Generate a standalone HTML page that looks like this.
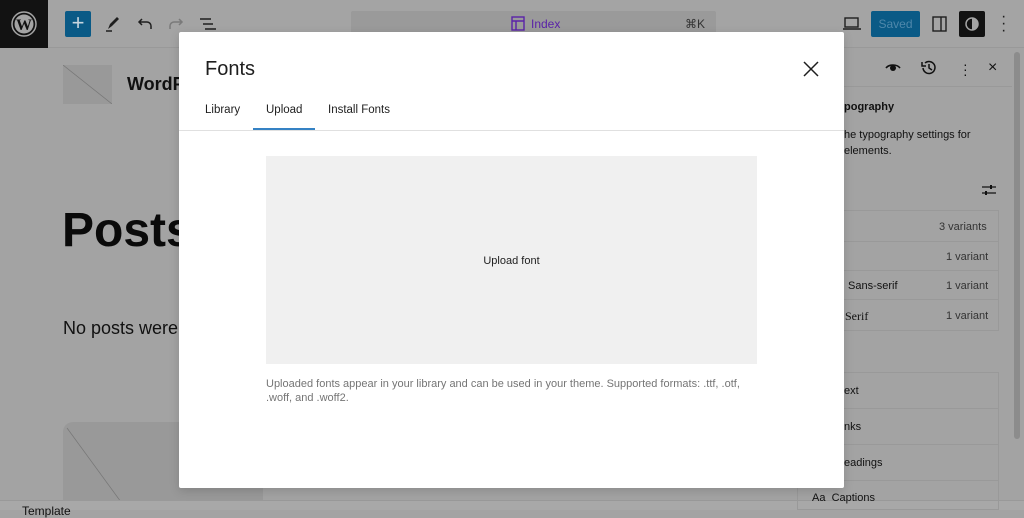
<!DOCTYPE html>
<html><head><style>
*{box-sizing:border-box;margin:0;padding:0}
body{width:1024px;height:510px;overflow:hidden;background:#a3a3a3;font-family:"Liberation Sans",sans-serif;position:relative;color:#111}
.a{position:absolute}
</style></head><body>
<div class="a" style="left:0;top:0;width:1024px;height:48px;background:#a4a4a4;border-bottom:1px solid #999"></div>
<div class="a" style="left:0;top:0;width:48px;height:48px;background:#121212"></div>
<svg class="a" style="left:11px;top:11px" width="26" height="26" viewBox="0 0 26 26"><circle cx="13" cy="13" r="12" fill="none" stroke="#a4a4a4" stroke-width="1.5"/><circle cx="13" cy="13" r="9.5" fill="#a4a4a4"/><text x="13" y="19" font-size="16" font-weight="bold" text-anchor="middle" fill="#121212" font-family="Liberation Serif,serif">W</text></svg>
<div class="a" style="left:65px;top:11px;width:26px;height:26px;background:#0a5a86;border-radius:2px;color:#c8d6df;font-size:22px;line-height:24px;text-align:center">+</div>
<svg class="a" style="left:100px;top:12px" width="24" height="24"><path d="M8 17l2-5 7-7 2 2-7 7z" fill="#1e1e1e"/><path d="M6 19h6" stroke="#1e1e1e" stroke-width="1.5"/></svg>
<svg class="a" style="left:133px;top:12px" width="24" height="24"><path d="M18 17v-3a4 4 0 0 0-4-4H6M9 7l-3 3 3 3" fill="none" stroke="#1e1e1e" stroke-width="1.5"/></svg>
<svg class="a" style="left:164px;top:12px" width="24" height="24"><path d="M6 17v-3a4 4 0 0 1 4-4h8M15 7l3 3-3 3" fill="none" stroke="#7a7a7a" stroke-width="1.5"/></svg>
<svg class="a" style="left:196px;top:12px" width="24" height="24"><path d="M4 7h11M7 12h10M9 17h11" stroke="#1e1e1e" stroke-width="1.5"/></svg>
<div class="a" style="left:351px;top:11px;width:365px;height:26px;background:#9a9a9a;border-radius:2px"></div>
<svg class="a" style="left:511px;top:16px" width="14" height="16"><rect x="1" y="1" width="12" height="13" fill="none" stroke="#5a22a8" stroke-width="1.4"/><path d="M1 5h12M5 5v9" stroke="#5a22a8" stroke-width="1.4"/></svg>
<div class="a" style="left:531px;top:17px;font-size:12px;color:#5a22a8">Index</div>
<div class="a" style="left:685px;top:17px;font-size:12px;color:#333">⌘K</div>
<svg class="a" style="left:842px;top:14px" width="20" height="20"><rect x="3" y="4" width="13" height="9" fill="none" stroke="#1e1e1e" stroke-width="1.4"/><path d="M1 15h18" stroke="#1e1e1e" stroke-width="1.4"/></svg>
<div class="a" style="left:871px;top:11px;width:49px;height:26px;background:#0a5a86;border-radius:2px;color:#4f88ab;font-size:12px;line-height:26px;text-align:center">Saved</div>
<svg class="a" style="left:930px;top:14px" width="20" height="20"><rect x="3" y="3" width="13" height="14" fill="none" stroke="#1e1e1e" stroke-width="1.4"/><path d="M11 3v14" stroke="#1e1e1e" stroke-width="1.4"/></svg>
<div class="a" style="left:959px;top:11px;width:26px;height:26px;background:#121212;border-radius:2px"></div>
<svg class="a" style="left:964px;top:16px" width="16" height="16"><circle cx="8" cy="8" r="6" fill="none" stroke="#a4a4a4" stroke-width="1.5"/><path d="M8 2a6 6 0 0 1 0 12z" fill="#a4a4a4"/></svg>
<div class="a" style="left:1001px;top:13px;font-size:16px;line-height:7px;color:#1e1e1e;width:4px">·<br>·<br>·</div>
<div class="a" style="left:63px;top:65px;width:49px;height:39px;background:#999;overflow:hidden"><svg width="49" height="39"><path d="M0 0L49 39" stroke="#777" stroke-width=".7"/></svg></div>
<div class="a" style="left:127px;top:74px;font-size:18px;font-weight:bold;color:#111">WordPress</div>
<div class="a" style="left:62px;top:203px;font-size:48px;font-weight:bold;color:#0a0a0a">Posts</div>
<div class="a" style="left:63px;top:318px;font-size:18px;color:#111">No posts were found</div>
<div class="a" style="left:63px;top:422px;width:200px;height:80px;background:#999;border-radius:10px 0 0 0;overflow:hidden"><svg width="200" height="80"><path d="M4 6L58 80" stroke="#777" stroke-width=".7"/></svg></div>
<div class="a" style="left:0;top:500px;width:1024px;height:10px;background:#a8a8a8;border-top:1px solid #999"></div>
<div class="a" style="left:22px;top:504px;font-size:12px;color:#111">Template</div>
<div class="a" style="left:797px;top:49px;width:215px;height:451px;border-left:1px solid #999"></div>
<div class="a" style="left:797px;top:86px;width:215px;border-top:1px solid #999"></div>
<div class="a" style="left:1014px;top:52px;width:6px;height:387px;background:#8c8c8c;border-radius:3px"></div>
<svg class="a" style="left:884px;top:59px" width="18" height="18"><path d="M2 9c3-4 11-4 14 0" fill="none" stroke="#111" stroke-width="1.6"/><circle cx="9" cy="9" r="3" fill="#111"/></svg>
<svg class="a" style="left:919px;top:58px" width="20" height="20"><path d="M4 10a6 6 0 1 0 2-5" fill="none" stroke="#111" stroke-width="1.5"/><path d="M3 4v4h4M10 6v4l3 2" fill="none" stroke="#111" stroke-width="1.5"/></svg>
<div class="a" style="left:963px;top:62px;font-size:14px;line-height:5px;color:#111">·<br>·<br>·</div>
<div class="a" style="left:988px;top:59px;font-size:16px;color:#111">×</div>
<div class="a" style="left:844px;top:101px;font-size:11px;font-weight:bold;color:#111">pography</div>
<div class="a" style="left:844px;top:127px;font-size:11px;line-height:16px;color:#111">he typography settings for<br>elements.</div>
<svg class="a" style="left:981px;top:182px" width="16" height="16"><path d="M1 5h14M1 11h14" stroke="#111" stroke-width="1.3"/><rect x="9" y="3" width="2" height="4" fill="#111"/><rect x="4" y="9" width="2" height="4" fill="#111"/></svg>
<div class="a" style="left:797px;top:210px;width:202px;height:121px;border:1px solid #999"></div>
<div class="a" style="left:797px;top:241px;width:202px;border-top:1px solid #999"></div>
<div class="a" style="left:797px;top:270px;width:202px;border-top:1px solid #999"></div>
<div class="a" style="left:797px;top:299px;width:202px;border-top:1px solid #999"></div>
<div class="a" style="left:939px;top:221px;font-size:11px;color:#333">3 variants</div>
<div class="a" style="left:946px;top:251px;font-size:11px;color:#333">1 variant</div>
<div class="a" style="left:848px;top:280px;font-size:11px;color:#111">Sans-serif</div>
<div class="a" style="left:946px;top:280px;font-size:11px;color:#333">1 variant</div>
<div class="a" style="left:845px;top:309px;font-size:12px;color:#111;font-family:'Liberation Serif',serif">Serif</div>
<div class="a" style="left:946px;top:310px;font-size:11px;color:#333">1 variant</div>
<div class="a" style="left:797px;top:372px;width:202px;height:138px;border:1px solid #999"></div>
<div class="a" style="left:797px;top:408px;width:202px;border-top:1px solid #999"></div>
<div class="a" style="left:797px;top:444px;width:202px;border-top:1px solid #999"></div>
<div class="a" style="left:797px;top:480px;width:202px;border-top:1px solid #999"></div>
<div class="a" style="left:844px;top:385px;font-size:11px">ext</div>
<div class="a" style="left:844px;top:421px;font-size:11px">nks</div>
<div class="a" style="left:844px;top:457px;font-size:11px">eadings</div>
<div class="a" style="left:812px;top:492px;font-size:11px">Aa&nbsp;&nbsp;Captions</div>
<div class="a" style="left:179px;top:32px;width:665px;height:456px;background:#fff;border-radius:2px;box-shadow:0 3px 10px rgba(0,0,0,.15)">
 <div class="a" style="left:26px;top:26px;font-size:20px;color:#1e1e1e">Fonts</div>
 <svg class="a" style="left:622px;top:27px" width="20" height="20"><path d="M3 3l14 14M17 3L3 17" stroke="#1e1e1e" stroke-width="1.5"/></svg>
 <div class="a" style="left:26px;top:72px;font-size:11.5px;color:#1e1e1e">Library</div>
 <div class="a" style="left:87px;top:72px;font-size:11.5px;color:#1e1e1e">Upload</div>
 <div class="a" style="left:149px;top:72px;font-size:11.5px;color:#1e1e1e">Install Fonts</div>
 <div class="a" style="left:0;top:98px;width:665px;border-top:1px solid #e0e0e0"></div>
 <div class="a" style="left:74px;top:96px;width:62px;height:2px;background:#3582c4"></div>
 <div class="a" style="left:87px;top:124px;width:491px;height:208px;background:#f0f0f0;text-align:center;font-size:11px;line-height:210px;color:#1e1e1e">Upload font</div>
 <div class="a" style="left:87px;top:345px;width:500px;font-size:11px;line-height:14px;color:#757575">Uploaded fonts appear in your library and can be used in your theme. Supported formats: .ttf, .otf, .woff, and .woff2.</div>
</div>
</body></html>
